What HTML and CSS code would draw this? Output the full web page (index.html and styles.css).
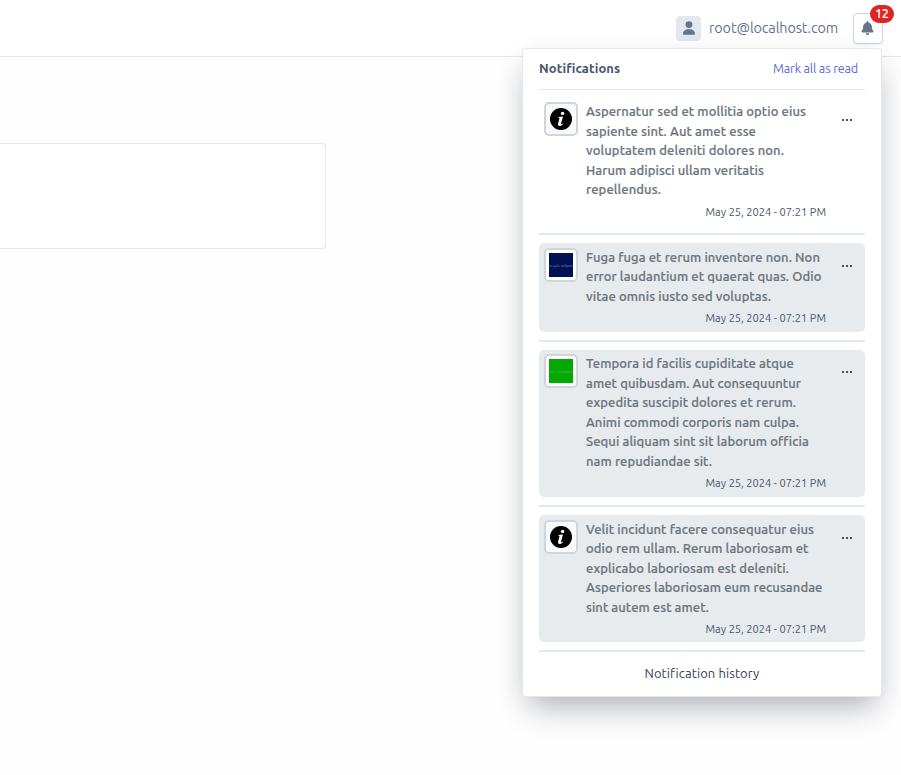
FILE: index.html
```html
<!DOCTYPE html>
<html lang="en">
<head>
<meta charset="utf-8">
<title>Notifications</title>
<link rel="stylesheet" href="styles.css">
</head>
<body>
<header class="topbar">
  <div class="user">
    <span class="avatar"><svg width="14" height="16" viewBox="0 0 448 512"><path d="M224 256A128 128 0 1 0 224 0a128 128 0 1 0 0 256zm-46 48C80 304 0 384 0 482c0 17 13 30 30 30h388c17 0 30-13 30-30 0-98-80-178-178-178z"/></svg></span>
    <span class="email"><span class="fit" data-w="129">root@localhost.com</span></span>
  </div>
  <div class="bell-wrap">
    <button class="bell" aria-label="Notifications"><svg width="13" height="14" viewBox="0 0 448 512"><path d="M224 0c-18 0-32 14-32 32v19C119 66 64 131 64 208v19c0 47-17 92-48 128l-8 8c-8 10-10 23-5 34s16 19 29 19h384c13 0 24-7 29-19s3-25-5-34l-8-8c-31-36-48-81-48-128v-19c0-77-55-142-128-157V32c0-18-14-32-32-32zm45 493c12-12 19-28 19-45H160c0 17 7 33 19 45s28 19 45 19 33-7 45-19z"/></svg></button>
    <span class="badge">12</span>
    <section class="panel">
      <div class="panel-head"><h2><span class="fit" data-w="81">Notifications</span></h2><a><span class="fit" data-w="85">Mark all as read</span></a></div>
      <div class="list">
        <article class="item">
          <span class="thumb info"><svg width="24" height="24" viewBox="0 0 24 24"><circle cx="12" cy="12" r="11"/><g fill="#fff"><circle cx="13.6" cy="6.4" r="1.7"/><path d="M9 10l5-.6-2 7.4c-.2.8.3.8 1.600-.4l.5.5c-2.600 3-5.700 2.500-5-.4l1.400-5.200c.2-.7-.2-.8-1.500-.8z"/></g></svg></span>
          <div class="body">
            <p><span class="fit" data-w="220">Aspernatur sed et mollitia optio eius</span><span class="fit" data-w="170">sapiente sint. Aut amet esse</span><span class="fit" data-w="198">voluptatem deleniti dolores non.</span><span class="fit" data-w="178">Harum adipisci ullam veritatis</span><span class="fit" data-w="75">repellendus.</span></p>
            <time><span class="fit" data-w="120.500">May 25, 2024 - 07:21 PM</span></time>
          </div>
          <span class="dots"><i></i><i></i><i></i></span>
        </article>
        <article class="item unread snug">
          <span class="thumb"><span class="pic navy">people adipisci</span></span>
          <div class="body">
            <p><span class="fit" data-w="234">Fuga fuga et rerum inventore non. Non</span><span class="fit" data-w="235.500">error laudantium et quaerat quas. Odio</span><span class="fit" data-w="185">vitae omnis iusto sed voluptas.</span></p>
            <time><span class="fit" data-w="120.500">May 25, 2024 - 07:21 PM</span></time>
          </div>
          <span class="dots"><i></i><i></i><i></i></span>
        </article>
        <article class="item unread snug">
          <span class="thumb"><span class="pic green">ple voluptas</span></span>
          <div class="body">
            <p><span class="fit" data-w="208">Tempora id facilis cupiditate atque</span><span class="fit" data-w="215">amet quibusdam. Aut consequuntur</span><span class="fit" data-w="210">expedita suscipit dolores et rerum.</span><span class="fit" data-w="213">Animi commodi corporis nam culpa.</span><span class="fit" data-w="222.500">Sequi aliquam sint sit laborum officia</span><span class="fit" data-w="126">nam repudiandae sit.</span></p>
            <time><span class="fit" data-w="120.500">May 25, 2024 - 07:21 PM</span></time>
          </div>
          <span class="dots"><i></i><i></i><i></i></span>
        </article>
        <article class="item unread">
          <span class="thumb info"><svg width="24" height="24" viewBox="0 0 24 24"><circle cx="12" cy="12" r="11"/><g fill="#fff"><circle cx="13.6" cy="6.4" r="1.7"/><path d="M9 10l5-.6-2 7.4c-.2.8.3.8 1.600-.4l.5.5c-2.600 3-5.700 2.500-5-.4l1.400-5.200c.2-.7-.2-.8-1.500-.8z"/></g></svg></span>
          <div class="body">
            <p><span class="fit" data-w="228">Velit incidunt facere consequatur eius</span><span class="fit" data-w="222.500">odio rem ullam. Rerum laboriosam et</span><span class="fit" data-w="203">explicabo laboriosam est deleniti.</span><span class="fit" data-w="236.500">Asperiores laboriosam eum recusandae</span><span class="fit" data-w="123">sint autem est amet.</span></p>
            <time><span class="fit" data-w="120.500">May 25, 2024 - 07:21 PM</span></time>
          </div>
          <span class="dots"><i></i><i></i><i></i></span>
        </article>
      </div>
      <a class="history"><span class="fit" data-w="114.500">Notification history</span></a>
    </section>
  </div>
</header>
<main><div class="card"></div></main>
<script src="fit.js"></script>
</body>
</html>
```
FILE: fit.js
```js
document.querySelectorAll('.fit').forEach(function (el) {
  var natural = el.getBoundingClientRect().width;
  var gap = (Number(el.dataset.w) - natural) / el.textContent.length;
  el.style.letterSpacing = gap + 'px';
});
```
FILE: styles.css
```css
* { box-sizing: border-box; }
body { margin: 0; height: 775px; overflow: hidden; background: #fefefe; color: #475569; font-family: Ubuntu, "Noto Sans", sans-serif; font-size: 13px; }
h2, p { margin: 0; }
.fit { display: block; width: max-content; white-space: nowrap; }
.topbar { height: 57px; background: #fff; border-bottom: 1px solid #e2e8f0; display: flex; justify-content: flex-end; align-items: center; padding-right: 18px; }
.user { display: flex; align-items: center; gap: 8px; margin-right: 15px; font-size: 14.4px; color: #64748b; }
.email { padding-bottom: .6px; }
.avatar { width: 25px; height: 25px; border-radius: 4px; background: #e2e8f0; display: grid; place-items: center; }
svg { display: block; }
.avatar svg, .bell svg { fill: #64748b; }
.avatar svg { width: 12px; height: 14px; }
.bell-wrap { position: relative; width: 30px; height: 31px; }
.bell { width: 30px; height: 31px; padding: 0 1px 1px 0; border: 1px solid #cbd5e1; border-radius: 4px; background: #fff; display: grid; place-items: center; box-shadow: 0 1px 2px rgba(15,23,42,.08); }
.badge { position: absolute; z-index: 2; left: 17px; top: -8px; width: 24px; height: 18px; border-radius: 9px; background: #dc2626; color: #fff; font-size: 12px; font-weight: 500; line-height: 18px; text-align: center; -webkit-text-stroke: .2px; }
.panel { position: absolute; right: 1px; top: 35px; width: 360px; height: 649px; padding: 0 16px; background: #fff; border: 1px solid #e2e8f0; border-radius: 4px; box-shadow: 0 16px 30px -7px rgba(15,23,42,.32), 0 2px 32px rgba(15,23,42,.03); }
.panel-head { height: 41px; display: flex; align-items: center; justify-content: space-between; padding: 0 7px 2px 0; border-bottom: 1px solid #e2e8f0; }
.panel-head h2 { font-size: 13px; font-weight: 700; }
.panel-head a { font-size: 12.6px; color: #5a67d8; }
.list { padding-top: 7.5px; }
.item { display: flex; align-items: flex-start; padding: 5px; margin-bottom: 18px; border-radius: 5px; position: relative; }
.snug { padding-top: 4.6px; padding-bottom: 5.4px; }
.item:first-child { margin-bottom: 18.7px; }
.item::after { content: ""; position: absolute; left: 0; right: 0; bottom: -10px; height: 2px; background: #e2e8f0; }
.unread { background: #e8ebee; }
.thumb { flex: none; width: 34px; height: 34px; border: 2px solid #d1d5db; border-radius: 5px; background: #fff; display: grid; place-items: center; }
.info { background: #f8fafc; }
.pic { width: 24px; height: 24px; overflow: hidden; white-space: nowrap; font-size: 4px; line-height: 25px; color: #8088a0; display: flex; justify-content: center; }
.navy { background: #001155; }
.green { background: #00aa00; color: #60b860; }
.body { width: 240px; margin-left: 8px; }
.body p { font-weight: 500; line-height: 19.5px; color: #6c757d; -webkit-text-stroke: .2px; }
.body time { display: flex; justify-content: flex-end; font-size: 11px; line-height: 16.5px; padding-top: 3.5px; }
.snug time { padding-top: 3.9px; margin-bottom: -.4px; }
.item:first-child time { padding-top: 4px; margin-bottom: -.5px; }
.dots { display: flex; gap: 2px; margin: 17px 0 0 16px; }
.dots i { width: 2px; height: 2px; background: #475569; }
.history { display: flex; justify-content: center; line-height: 19.5px; padding-top: 4px; color: #334155; }
.card { width: 326px; height: 106px; margin-top: 86px; background: #fff; border: 1px solid #e2e8f0; border-left: 0; border-radius: 0 4px 4px 0; }
```
